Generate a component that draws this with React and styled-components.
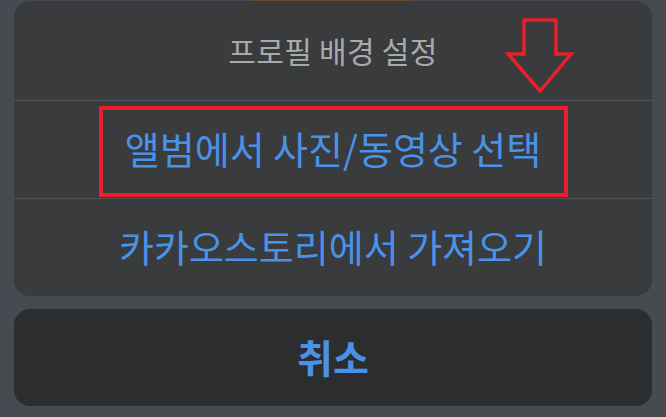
import React from 'react'
import styled, { createGlobalStyle } from 'styled-components'

const GlobalStyle = createGlobalStyle`
  html, body {
    margin: 0;
    padding: 0;
    background: #454b50;
    font-family: "Noto Sans CJK KR", "Noto Sans", sans-serif;
  }
`

const Screen = styled.div`
  width: 666px;
  height: 417px;
  box-sizing: border-box;
  padding: 1px 14px 0;
  display: flex;
  flex-direction: column;
  gap: 13px;
  position: relative;
  overflow: hidden;
`

const BehindStrip = styled.div`
  position: absolute;
  top: 0;
  left: 250px;
  width: 160px;
  height: 1px;
  background: #6b4a2e;
`

const Sheet = styled.div`
  background: #393b3d;
  border-radius: 16px;
  display: flex;
  flex-direction: column;
  overflow: hidden;
`

const Row = styled.div`
  position: relative;
  box-sizing: border-box;
  height: ${p => p.$h}px;
  padding-bottom: ${p => (p.$title ? 2 : 4)}px;
  display: flex;
  align-items: center;
  justify-content: center;
  border-bottom: ${p => (p.$last ? 'none' : '1px solid #505356')};
  color: ${p => (p.$title ? '#a9aaab' : '#4a92e8')};
  font-size: ${p => (p.$title ? 30 : 38)}px;
  letter-spacing: ${p => (p.$title ? '0.3px' : '0')};
`

const Highlight = styled.div`
  position: absolute;
  left: 85px;
  top: 5px;
  width: 469px;
  height: 91px;
  box-sizing: border-box;
  border: 4px solid #e8202a;
`

const Arrow = styled.svg`
  position: absolute;
  left: 476px;
  top: 13px;
`

const Cancel = styled.div`
  height: 97px;
  box-sizing: border-box;
  padding-bottom: 4px;
  background: #2c2d2f;
  border-radius: 16px;
  display: flex;
  align-items: center;
  justify-content: center;
  color: #4a92e8;
  font-size: 39px;
  font-weight: 700;
`

const App = () => (
  <>
    <GlobalStyle />
    <Screen>
      <BehindStrip />
      <Sheet>
        <Row $h={100} $title>
          프로필 배경 설정
          <Arrow width="90" height="84" viewBox="0 0 90 84">
            <polygon
              points="34,6 66,6 66,40 81,40 50,77 18,40 34,40"
              fill="none"
              stroke="#e8202a"
              strokeWidth="3.5"
              strokeLinejoin="miter"
            />
          </Arrow>
        </Row>
        <Row $h={98}>
          앨범에서 사진/동영상 선택
          <Highlight />
        </Row>
        <Row $h={97} $last>
          카카오스토리에서 가져오기
        </Row>
      </Sheet>
      <Cancel>취소</Cancel>
    </Screen>
  </>
)

export default App
